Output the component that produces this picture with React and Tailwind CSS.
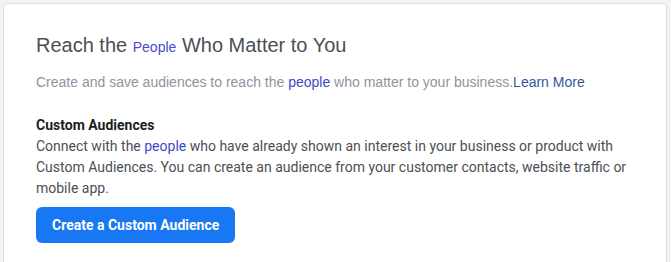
import React from 'react';

const App = () => {
  return (
    <div className="h-[262px] w-[671px] bg-[#f2f3f5] pl-[3px] pt-[3px] overflow-hidden">
      <div className="w-[664px] h-[280px] bg-white border border-[#dddfe2] rounded-[4px] pl-[32px] pt-[29px]">
        <h2 className="font-['Liberation_Sans',Arial,sans-serif] text-[20px] leading-[24px] text-[#4b4f56]">
          Reach the <span className="text-[14px] text-[#4b4bd0]">People</span> Who Matter to You
        </h2>
        <p className="mt-[13px] font-['Liberation_Sans',Arial,sans-serif] text-[14px] leading-[20px] text-[#90949c]">
          Create and save audiences to reach the <span className="text-[#3f48cc]">people</span> who matter to your business.
          <a className="text-[#365899]">Learn More</a>
        </p>

        <div className="mt-[23px] font-['Roboto',sans-serif] text-[14px] leading-[21px] text-[#4b4f56] w-[600px]">
          <h4 className="font-bold text-[#1c1e21]">Custom Audiences</h4>
          <p>
            Connect with the <span className="text-[#3f48cc]">people</span> who have already shown an interest in your business or product with Custom Audiences. You can create an audience from your customer contacts, website traffic or mobile app.
          </p>
          <button className="mt-[8px] h-[36px] px-[16px] rounded-[6px] bg-[#1877f2] text-white font-bold text-[14px]">
            Create a Custom Audience
          </button>
        </div>
      </div>
    </div>
  );
};

export default App;
